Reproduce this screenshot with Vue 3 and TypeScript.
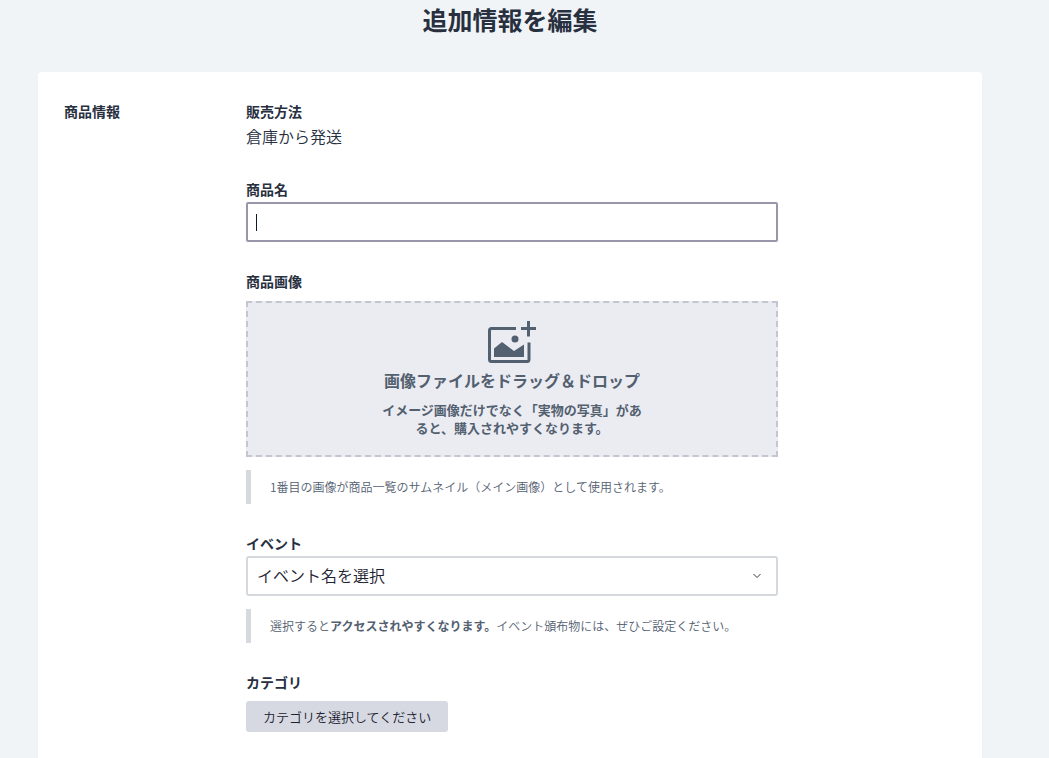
<script setup lang="ts">
import { ref } from 'vue'

const productName = ref('')
const selectedEvent = ref('')
const fileInput = ref<HTMLInputElement | null>(null)

function openPicker(): void {
  fileInput.value?.click()
}
</script>

<template>
  <main class="page">
    <h1 class="title">追加情報を編集</h1>

    <form class="card" @submit.prevent>
      <h2 class="label">商品情報</h2>

      <div class="fields">
        <div class="field">
          <h3 class="label">販売方法</h3>
          <p class="value">倉庫から発送</p>
        </div>

        <div class="field">
          <label class="label" for="product-name">商品名</label>
          <div class="name-box">
            <input id="product-name" v-model="productName" class="control name" type="text" autocomplete="off" />
            <span v-if="!productName" class="caret" aria-hidden="true"></span>
          </div>
        </div>

        <div class="field">
          <label class="label" for="product-image">商品画像</label>
          <button class="dropzone" type="button" @click="openPicker">
            <svg class="drop-icon" viewBox="0 0 48 43" aria-hidden="true">
              <path
                d="M28 7.500H3.500a2 2 0 0 0-2 2v29a2 2 0 0 0 2 2h35.500a2 2 0 0 0 2-2V21.500"
                fill="none"
                stroke="currentColor"
                stroke-width="3"
              />
              <path d="M33 7.500h15M40.500 0v15.500" fill="none" stroke="currentColor" stroke-width="3" />
              <circle cx="27" cy="18" r="3.500" fill="currentColor" />
              <path d="M6 27.500L14 21l12 9 10-6.500V36H6z" fill="currentColor" />
            </svg>
            <span class="drop-title">画像ファイルをドラッグ＆ドロップ</span>
            <span class="drop-text">イメージ画像だけでなく「実物の写真」があると、購入されやすくなります。</span>
          </button>
          <input id="product-image" ref="fileInput" type="file" accept="image/*" multiple hidden />
          <p class="note">1番目の画像が商品一覧のサムネイル（メイン画像）として使用されます。</p>
        </div>

        <div class="field">
          <label class="label" for="event">イベント</label>
          <div class="select-box">
            <select id="event" v-model="selectedEvent" class="control">
              <option value="">イベント名を選択</option>
            </select>
            <svg class="chevron" viewBox="0 0 10 6" aria-hidden="true">
              <path d="M1.500 1L5 4.500 8.500 1" fill="none" stroke="currentColor" stroke-width="1" />
            </svg>
          </div>
          <p class="note">
            選択すると<strong>アクセスされやすくなります。</strong>イベント頒布物には、ぜひご設定ください。
          </p>
        </div>

        <div class="field">
          <h3 class="label">カテゴリ</h3>
          <button class="category" type="button">カテゴリを選択してください</button>
        </div>
      </div>
    </form>
  </main>
</template>

<style>
body {
  margin: 0;
  background: #f0f4f7;
}
</style>

<style scoped>
.page {
  box-sizing: border-box;
  min-height: 100vh;
  display: flex;
  flex-direction: column;
  padding: 0 67px 0 38px;
  color: #28303f;
  background: #f0f4f7;
  font-family: "Noto Sans CJK JP", sans-serif;
  font-weight: 350;
}

.title {
  margin: 0 0 34px;
  font-size: 25px;
  line-height: 38px;
  text-align: center;
}

.card {
  flex: 1;
  display: grid;
  grid-template-columns: 182px minmax(0, 1fr);
  align-items: start;
  padding: 29px 204px 26px 26px;
  background: #fff;
  border-radius: 4px 4px 0 0;
}

.fields {
  display: flex;
  flex-direction: column;
  gap: 29px;
}

.field {
  display: flex;
  flex-direction: column;
}

.label {
  margin: 0 0 3px;
  font-size: 14px;
  line-height: 20px;
  font-weight: 700;
}

.value {
  margin: 0 0 2px;
  font-size: 16px;
  line-height: 24px;
}

.name-box,
.select-box {
  position: relative;
}

.control {
  display: block;
  box-sizing: border-box;
  width: 100%;
  height: 40px;
  margin: 0;
  padding: 0 32px 3px 9px;
  border: 2px solid #d5d9de;
  border-radius: 3px;
  outline: none;
  appearance: none;
  background: #fff;
  color: #1c2230;
  font: 350 16px/24px "Noto Sans CJK JP", sans-serif;
}

.name {
  padding: 0 8px;
  border-color: #9896ab;
  border-radius: 2px;
}

.caret {
  position: absolute;
  left: 10px;
  top: 12px;
  width: 1px;
  height: 17px;
  background: #111827;
  pointer-events: none;
}

.name:focus + .caret {
  display: none;
}

.chevron {
  position: absolute;
  right: 16px;
  top: 17px;
  width: 10px;
  height: 6px;
  color: #333a46;
  pointer-events: none;
}

.dropzone {
  display: flex;
  flex-direction: column;
  align-items: center;
  margin: 7px 0 0;
  padding: 18px 16px;
  border: 2px dashed #c3c5d1;
  background: #ebecf2;
  color: #536070;
  font-family: inherit;
  font-weight: 700;
  cursor: pointer;
}

.drop-icon {
  width: 48px;
  height: 43px;
}

.drop-title {
  margin: 4px 0 9px;
  font-size: 16px;
  line-height: 24px;
}

.drop-text {
  max-width: 260px;
  font-size: 13px;
  line-height: 18px;
}

.note {
  margin: 13px 0 0;
  padding: 0 0 0 19px;
  border-left: 5px solid #d5dade;
  color: #536070;
  font-size: 12px;
  line-height: 34px;
}

.note strong {
  font-weight: 700;
}

.category {
  align-self: flex-start;
  margin: 6px 0 0;
  padding: 0 17px;
  border: 0;
  border-radius: 3px;
  background: #d6d9e1;
  color: #1c2230;
  font-family: inherit;
  font-size: 13px;
  font-weight: 350;
  line-height: 31px;
  cursor: pointer;
}
</style>
